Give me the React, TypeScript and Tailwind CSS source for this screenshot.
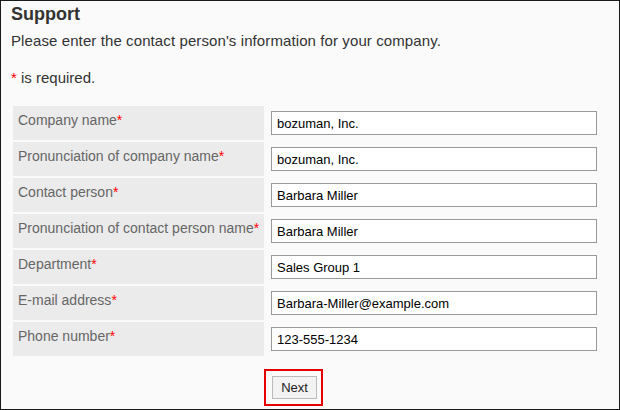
const fields = [
  { label: "Company name", value: "bozuman, Inc." },
  { label: "Pronunciation of company name", value: "bozuman, Inc." },
  { label: "Contact person", value: "Barbara Miller" },
  { label: "Pronunciation of contact person name", value: "Barbara Miller" },
  { label: "Department", value: "Sales Group 1" },
  { label: "E-mail address", value: "Barbara-Miller@example.com" },
  { label: "Phone number", value: "123-555-1234" },
];

export default function App() {
  return (
    <div
      className="h-[410px] w-[620px] border border-[#1a1a1a] bg-[#fafafa] text-[#333]"
      style={{ fontFamily: '"Liberation Sans", Arial, sans-serif' }}
    >
      <div className="pl-[10px] pt-[3px]">
        <h2 className="text-[18px] font-bold leading-[21px]">Support</h2>
        <p className="mt-[7px] text-[15px] leading-[17px] tracking-[0.1px]">
          Please enter the contact person's information for your company.
        </p>
        <p className="mt-[20px] text-[15px] leading-[17px]">
          <span className="text-[#f00]">*</span> is required.
        </p>
      </div>

      <div className="ml-[12px] mt-[20px] flex flex-col gap-[2px]">
        {fields.map((f) => (
          <div key={f.label} className="flex h-[34px] items-stretch">
            <div className="w-[251px] whitespace-nowrap bg-[#ebebeb] pl-[5px] pt-[6px] text-[14px] leading-[16px] text-[#666]">
              {f.label}
              <span className="text-[#f00]">*</span>
            </div>
            <div className="ml-[7px] flex items-center">
              <input
                type="text"
                defaultValue={f.value}
                className="h-[24px] w-[326px] border border-[#999] bg-white px-[5px] text-[13px] text-black outline-none"
              />
            </div>
          </div>
        ))}
      </div>

      <div className="ml-[263px] mt-[13px] flex">
        <div className="flex h-[37px] w-[59px] items-center border-2 border-[#e60000] pl-[6px]">
          <button
            type="button"
            className="h-[23px] w-[45px] border border-[#bbb] bg-[#f3f3f3] text-[13px] leading-[21px] text-[#222]"
          >
            Next
          </button>
        </div>
      </div>
    </div>
  );
}
